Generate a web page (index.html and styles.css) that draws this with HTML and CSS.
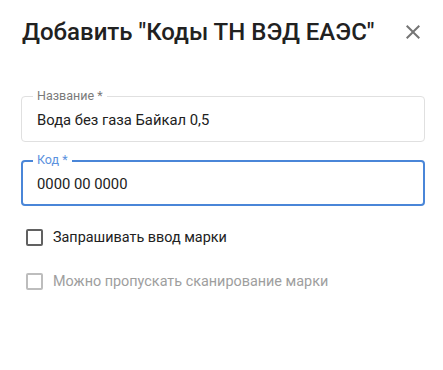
FILE: index.html
```html
<!DOCTYPE html>
<html lang="ru">
<head>
<meta charset="utf-8">
<link rel="stylesheet" href="styles.css">
</head>
<body>
<div class="dialog">
  <div class="header">
    <h2 class="title">Добавить "Коды ТН ВЭД ЕАЭС"</h2>
    <button class="close" aria-label="close">
      <svg viewBox="0 0 24 24" width="24" height="24"><path d="M19 6.41 17.59 5 12 10.59 6.41 5 5 6.41 10.59 12 5 17.59 6.41 19 12 13.41 17.59 19 19 17.59 13.41 12z" fill="currentColor"/></svg>
    </button>
  </div>
  <div class="content">
    <div class="field">
      <span class="label">Название *</span>
      <div class="value">Вода без газа Байкал 0,5</div>
    </div>
    <div class="field focused">
      <span class="label">Код *</span>
      <div class="value">0000 00 0000</div>
    </div>
    <label class="check">
      <span class="box"></span>
      <span class="text">Запрашивать ввод марки</span>
    </label>
    <label class="check disabled">
      <span class="box"></span>
      <span class="text">Можно пропускать сканирование марки</span>
    </label>
  </div>
</div>
</body>
</html>
```
FILE: styles.css
```css
html, body {
  margin: 0;
  padding: 0;
  background: #fff;
}
body {
  font-family: Roboto, "Noto Sans", sans-serif;
  color: #212121;
}
.dialog {
  width: 443px;
  height: 370px;
  box-sizing: border-box;
}
.header {
  display: flex;
  align-items: center;
  justify-content: space-between;
  padding: 15px 18px 0 22px;
  height: 34px;
}
.title {
  margin: 0;
  font-size: 24px;
  font-weight: 500;
  line-height: 34px;
  color: #212121;
}
.close {
  border: 0;
  background: none;
  padding: 0;
  width: 24px;
  height: 24px;
  color: #757575;
  display: flex;
  align-items: center;
  justify-content: center;
}
.close svg {
  display: block;
}
.content {
  padding: 47px 18px 0 21px;
  display: flex;
  flex-direction: column;
}
.field {
  position: relative;
  height: 46px;
  box-sizing: border-box;
  border: 1px solid #e0e0e0;
  border-radius: 4px;
  padding: 0 15px;
  display: flex;
  align-items: center;
  margin-bottom: 18px;
}
.field.focused {
  border: 2px solid #4a86d8;
  padding: 0 14px;
  margin-bottom: 9px;
}
.label {
  position: absolute;
  left: 11px;
  top: -8px;
  padding: 0 4px;
  background: #fff;
  font-size: 12.5px;
  line-height: 14px;
  color: #7a7a7a;
}
.field.focused .label {
  left: 10px;
  top: -9px;
  color: #5b92de;
}
.value {
  font-size: 14.8px;
  color: #212121;
  padding-top: 1px;
}
.check {
  display: flex;
  align-items: center;
  height: 44px;
  margin-left: 5px;
}
.box {
  width: 17px;
  height: 17px;
  box-sizing: border-box;
  border: 2px solid #616161;
  border-radius: 2px;
  margin-right: 10px;
}
.text {
  font-size: 14.4px;
  color: #212121;
}
.check.disabled .box {
  border-color: #bdbdbd;
}
.check.disabled .text {
  color: #9e9e9e;
}
```
